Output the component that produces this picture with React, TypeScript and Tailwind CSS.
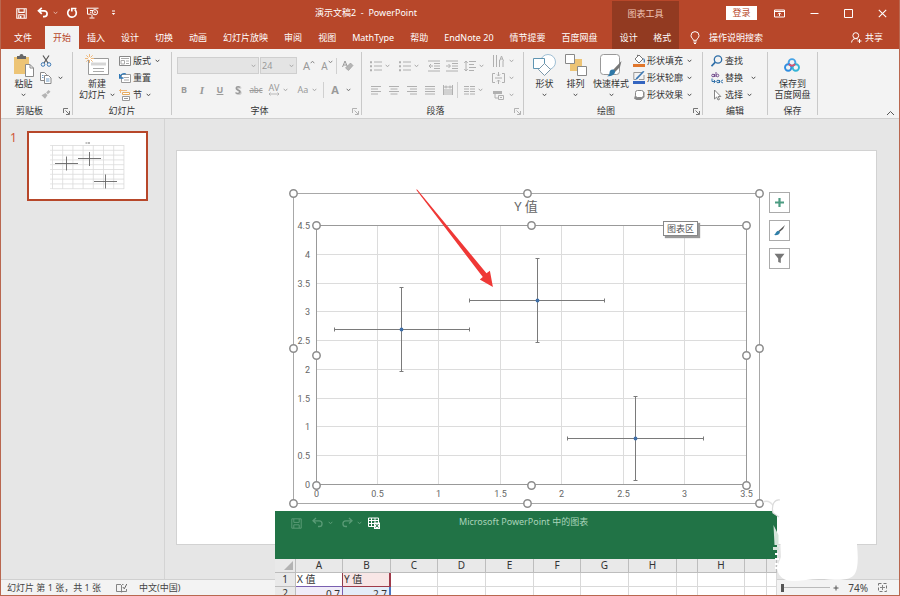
import type { ReactNode } from 'react';

interface IconProps {
  w?: number;
  h?: number;
  children: ReactNode;
}

const Icon = ({ w = 12, h = 12, children }: IconProps) => (
  <svg width={w} height={h} viewBox={`0 0 ${w} ${h}`} fill="none" className="shrink-0" aria-hidden="true">
    {children}
  </svg>
);

const Chevron = ({ color = '#555' }: { color?: string }) => (
  <Icon w={5} h={4}>
    <path d="M.7 .8 2.5 2.8 4.3 .8" stroke={color} />
  </Icon>
);

const Divider = () => <div className="my-[3px] w-px shrink-0 bg-[#c9c9c9]" />;

const Launcher = ({ color = '#777' }: { color?: string }) => (
  <button aria-label="更多选项" className="absolute right-0.5 bottom-[3px]">
    <Icon w={7} h={7}>
      <path d="M.5 5V.5H5M2.5 2.5 6 6M6.5 3v3.5H3" stroke={color} strokeWidth=".9" />
    </Icon>
  </button>
);

interface GroupProps {
  label: string;
  width: string;
  launcher?: string;
  children: ReactNode;
}

const Group = ({ label, width, launcher, children }: GroupProps) => (
  <>
    <section className={`relative flex shrink-0 flex-col ${width}`}>
      <div className="flex flex-1">{children}</div>
      <h2 className={`h-[14px] text-center leading-[14px] ${launcher ? 'pr-3.5' : ''}`}>{label}</h2>
      {launcher && <Launcher color={launcher} />}
    </section>
    <Divider />
  </>
);

interface BigButtonProps {
  icon: ReactNode;
  lines: string[];
  arrow?: boolean;
}

const BigButton = ({ icon, lines, arrow = true }: BigButtonProps) => (
  <button className="flex shrink-0 flex-col items-center pt-1 leading-[11px] whitespace-nowrap">
    <span className="mb-px flex h-6 items-center">{icon}</span>
    <span>{lines[0]}</span>
    <span className="flex h-[11px] items-center gap-1">
      {lines[1]}
      {arrow && <Chevron />}
    </span>
  </button>
);

const RowButton = ({ icon, text, arrow = true }: { icon: ReactNode; text: string; arrow?: boolean }) => (
  <button className="flex h-[17px] items-center gap-[2px] whitespace-nowrap">
    {icon}
    <span className="mr-0.5">{text}</span>
    {arrow && <Chevron />}
  </button>
);

const Tool = ({ label, width = 'w-[18px]', children }: { label: string; width?: string; children: ReactNode }) => (
  <button aria-label={label} className={`flex h-[17px] shrink-0 items-center justify-center ${width}`}>
    {children}
  </button>
);

const leftTabs = ['插入', '设计', '切换', '动画', '幻灯片放映', '审阅', '视图', 'MathType', '帮助', 'EndNote 20', '情节提要', '百度网盘'];

const Header = () => (
  <header className="flex h-[49px] shrink-0 bg-[#b7472a] text-white">
    <div className="flex w-[611px] shrink-0 flex-col">
      <div className="flex h-[26px] items-center pl-[15px]">
        <button aria-label="保存">
          <Icon w={11} h={11}>
            <path d="M.8 .8h9.4v9.4H.8zM2.8 1v3.4h5.4V1M2.8 10V6.8h5.4V10" stroke="#fff" strokeWidth="1.1" />
            <path d="M4 8h1.4v2H4z" fill="#fff" />
          </Icon>
        </button>
        <button aria-label="撤消" className="ml-2.5">
          <Icon>
            <path d="M4.8 .8 1.5 3.8l3.3 3M1.8 3.8h5.4a2.9 2.9 0 0 1 0 5.8H6" stroke="#fff" strokeWidth="1.7" />
          </Icon>
        </button>
        <span className="ml-1"><Chevron color="#e0b0a2" /></span>
        <button aria-label="恢复" className="ml-2">
          <Icon>
            <path d="M3.8 2.2A4.3 4.3 0 1 0 8.8 2.600M5.800 4.500V1.500h4.600" stroke="#fff" strokeWidth="1.7" />
          </Icon>
        </button>
        <button aria-label="从头开始" className="ml-2">
          <Icon w={13} h={12}>
            <path d="M.5 1.2h12M1.5 1.5v5.7h4M4 3.5h3M4 5.3h1.5M6 7.5v3M3.5 11h5" stroke="#fff" />
            <circle cx="9" cy="5.2" r="2.6" stroke="#fff" />
            <path d="m8.4 4 1.8 1.2-1.8 1.2z" fill="#fff" />
          </Icon>
        </button>
        <button aria-label="自定义快速访问工具栏" className="ml-3">
          <Icon w={5} h={6}>
            <path d="M1 1h3" stroke="#fff" />
            <path d="M.7 3h3.6L2.5 5z" fill="#fff" />
          </Icon>
        </button>
        <h1 className="ml-[199px] whitespace-pre">演示文稿2  -  PowerPoint</h1>
      </div>
      <nav className="flex h-[23px] items-stretch pl-[5px] whitespace-nowrap">
        <button className="mr-[5px] px-2">文件</button>
        <button className="bg-[#f3f3f3] px-2 text-[#b7472a]">开始</button>
        {leftTabs.map((tab) => (
          <button key={tab} className="px-2">{tab}</button>
        ))}
      </nav>
    </div>
    <div className="mt-px flex w-[67px] shrink-0 flex-col bg-[#923a21]">
      <div className="flex h-[25px] items-center justify-center text-[#f0c4b6]">图表工具</div>
      <div className="flex flex-1">
        <button className="flex-1">设计</button>
        <button className="flex-1">格式</button>
      </div>
    </div>
    <div className="flex flex-1 flex-col">
      <div className="flex h-[26px] items-center justify-end pr-3">
        <button className="mr-[17px] h-[14px] w-[31px] bg-white leading-[14px] text-[#b7472a]">登录</button>
        <button aria-label="功能区显示选项" className="mr-[25px]">
          <Icon w={11} h={9}>
            <path d="M.5 1h10v7H.5zM.5 2.5h10M5.5 7V4M4 5.3l1.5-1.5L7 5.3" stroke="#fff" />
          </Icon>
        </button>
        <button aria-label="最小化" className="mr-[25px]">
          <Icon w={9} h={9}><path d="M.5 4.5h8" stroke="#fff" /></Icon>
        </button>
        <button aria-label="最大化" className="mr-[25px]">
          <Icon w={9} h={9}><path d="M.5 .5h8v8h-8z" stroke="#fff" /></Icon>
        </button>
        <button aria-label="关闭">
          <Icon w={9} h={9}><path d="m.8 .8 7.4 7.4M8.2 .8.8 8.2" stroke="#fff" strokeWidth="1.1" /></Icon>
        </button>
      </div>
      <div className="flex h-[23px] items-center justify-between pr-4 pl-[11px]">
        <button className="flex items-center gap-[9px]">
          <Icon w={10} h={13}>
            <path d="M3.3 9.3C3.3 7.5 1 7 1 4.6a4 4 0 0 1 8 0C9 7 6.7 7.5 6.7 9.3zM3.4 11h3.2M4 12.5h2" stroke="#fff" />
          </Icon>
          操作说明搜索
        </button>
        <button className="flex items-center gap-[3px]">
          <Icon w={11} h={11}>
            <circle cx="4.8" cy="3.6" r="2.9" stroke="#fff" />
            <path d="M.6 10.5C.8 8 2.4 6.6 4.8 6.6c.9 0 1.6.2 2.2.6M8.5 7v4M6.5 9h4" stroke="#fff" />
          </Icon>
          共享
        </button>
      </div>
    </div>
  </header>
);

const ClipboardGroup = () => (
  <Group label="剪贴板" width="w-[71px]" launcher="#666">
    <div className="ml-3 flex gap-[6px]">
      <BigButton
        lines={['粘贴']}
        icon={
          <Icon w={21} h={23}>
            <path d="M1 3h15v17H1z" fill="#edc475" />
            <path d="M4 2h2.5a2 2 0 0 1 4 0H13v3H4z" fill="#666" />
            <path d="M12.5 10.500h4.500l3.500 3.500v8.500h-8z" fill="#fff" stroke="#8a8a8a" />
            <path d="M17 10.500V14h3.500" stroke="#8a8a8a" />
          </Icon>
        }
      />
      <div className="flex flex-col pt-[3px]">
        <Tool label="剪切" width="w-3">
          <Icon>
            <path d="M3 .5 8 8M9 .5 4 8" stroke="#555" strokeWidth="1.2" />
            <circle cx="3" cy="9.500" r="1.800" stroke="#3c78b4" />
            <circle cx="9" cy="9.500" r="1.800" stroke="#3c78b4" />
          </Icon>
        </Tool>
        <button aria-label="复制" className="flex h-[17px] items-center gap-[6px]">
          <Icon>
            <path d="M.5 .5h4l2 2v6h-6z" fill="#fff" stroke="#888" />
            <path d="M4.500 3.500h4l2.500 2.500v5.500H4.500z" fill="#fff" stroke="#888" />
            <path d="M2 3.500h1.500M2 5.500h1.500M6 7h3.500M6 9h3.500" stroke="#6f9dc8" />
          </Icon>
          <Chevron />
        </button>
        <Tool label="格式刷" width="w-3">
          <Icon w={10} h={9}>
            <path d="m7.500 0 2 1.800-2.700 2.400-1.600-1.700zM4.500 3l2 2.200L4 8.800.5 5.200z" fill="#b4b4b4" />
          </Icon>
        </Tool>
      </div>
    </div>
  </Group>
);

const SlidesGroup = () => (
  <Group label="幻灯片" width="w-[98px]">
    <div className="ml-[6px] flex gap-1">
      <BigButton
        lines={['新建', '幻灯片']}
        icon={
          <Icon w={24} h={22}>
            <path d="M3.500 4.500h20v16h-20z" fill="#fff" stroke="#9a9a9a" />
            <path d="M6 8.500h15v3H6z" fill="#d6d6d6" />
            <path d="M8 14.500h11M8 17.500h11" stroke="#aaa" />
            <path d="M4.500 0v9M0 4.500h9M1.300 1.300l6.400 6.400M7.700 1.300 1.300 7.700" stroke="#efb97c" />
            <circle cx="4.500" cy="4.500" r="1.500" fill="#fff" />
          </Icon>
        }
      />
      <div className="flex flex-col pt-[3px]">
        <RowButton
          text="版式"
          icon={
            <Icon>
              <path d="M.5 1.500h11v9H.5z" fill="#fff" stroke="#888" />
              <path d="M2 3.500h8M2 5.500h3.500v3.500H2zM7 6h3M7 8.500h3" stroke="#aaa" />
            </Icon>
          }
        />
        <RowButton
          text="重置"
          arrow={false}
          icon={
            <Icon>
              <path d="M2.500 2.500h9v8h-9z" fill="#fff" stroke="#999" />
              <path d="M5 5.500h5M5 8h5" stroke="#aaa" />
              <path d="M1 5.500c.5-3 3-4.500 6-3.500M.5 2v4h4" stroke="#2f78b7" strokeWidth="1.300" />
            </Icon>
          }
        />
        <RowButton
          text="节"
          icon={
            <Icon>
              <path d="M0 1.500h8M1.500 0v4" stroke="#efb97c" />
              <path d="M3.500 3.500h7v2h-7z" fill="#fff" stroke="#e6ac60" />
              <path d="M3.500 7.500h7v4h-7zM5 9.500h4" fill="#fff" stroke="#999" />
            </Icon>
          }
        />
      </div>
    </div>
  </Group>
);

const FontGroup = () => (
  <Group label="字体" width="w-[189px]" launcher="#aaa">
    <div className="flex flex-col gap-[7px] pt-2 text-[#9a9a9a]">
      <div className="flex items-center pl-[5px]">
        <div className="relative mr-px">
          <select aria-label="字体" className="block h-[17px] w-[82px] appearance-none border border-[#cfcfcf] bg-[#e4e4e4] leading-[15px]">
            <option value=""></option>
          </select>
          <span className="pointer-events-none absolute top-[5px] right-[3px] flex h-2 items-center"><Chevron color="#aaa" /></span>
        </div>
        <div className="relative mr-[3px]">
          <select aria-label="字号" className="block h-[17px] w-[37px] appearance-none border border-[#cfcfcf] bg-[#e4e4e4] pl-px leading-[15px]">
            <option>24</option>
          </select>
          <span className="pointer-events-none absolute top-[5px] right-[3px] flex h-2 items-center"><Chevron color="#aaa" /></span>
        </div>
        <Tool label="增大字号"><span className="text-[11px]">A</span><span className="mb-2 rotate-180"><Chevron color="#888" /></span></Tool>
        <Tool label="减小字号"><span className="text-[10px]">A</span><span className="mb-2"><Chevron color="#888" /></span></Tool>
        <div className="h-4 w-px bg-[#d0d0d0]" />
        <Tool label="清除格式" width="w-[22px]">
          <Icon w={12} h={12}>
            <path d="M.5 7 3 1l2.500 6M1.500 5h3" stroke="#999" />
            <path d="m8.500 3 2.500 2.500-4.500 5L3.500 8z" fill="#b5b5b5" stroke="#999" strokeWidth=".6" />
          </Icon>
        </Tool>
      </div>
      <div className="flex items-center pl-[3px]">
        <Tool label="加粗"><b>B</b></Tool>
        <Tool label="倾斜"><i className="[font-family:'Liberation_Serif',serif] text-[11px] font-bold">I</i></Tool>
        <Tool label="下划线"><b className="underline">U</b></Tool>
        <Tool label="文字阴影"><b className="text-[11px] drop-shadow-[1px_1px_0_#ccc]">S</b></Tool>
        <Tool label="删除线"><s className="text-[8px]">abc</s></Tool>
        <Tool label="字符间距">
          <span className="flex flex-col items-center leading-[9px]">
            AV
            <Icon w={12} h={4}><path d="M1 2h10M2.500 .5 1 2l1.500 1.500M9.500 .5 11 2 9.500 3.500" stroke="#aaa" strokeWidth=".8" /></Icon>
          </span>
        </Tool>
        <Chevron color="#aaa" />
        <span className="ml-1.5 flex items-center"><Tool label="更改大小写">Aa</Tool></span>
        <Chevron color="#aaa" />
        <div className="ml-1.5 h-4 w-px bg-[#d0d0d0]" />
        <Tool label="字体颜色" width="w-[22px]"><b className="text-[11px]">A</b></Tool>
        <Chevron color="#777" />
      </div>
    </div>
  </Group>
);

const grey = '#b0b0b0';

const alignments = [
  { label: '左对齐', d: 'M0 1.500h10M0 4h7M0 6.500h10M0 9h7' },
  { label: '居中', d: 'M0 1.500h10M1.500 4h7M0 6.500h10M1.500 9h7' },
  { label: '右对齐', d: 'M0 1.500h10M3 4h7M0 6.500h10M3 9h7' },
  { label: '两端对齐', d: 'M0 1.500h10M0 4h10M0 6.500h10M0 9h10' },
  { label: '分散对齐', d: 'M.5 0v10M9.500 0v10M1 2h8M3 .5v3M7 .5v3M0 5h10M0 7h10M0 9h10' },
];

const ParagraphGroup = () => (
  <Group label="段落" width="w-[161px]" launcher="#aaa">
    <div className="flex w-[126px] flex-col gap-[7px] pt-2 pl-[5px]">
      <div className="flex items-center">
        {['项目符号', '编号'].map((label) => (
          <span key={label} className="mr-[6px] flex items-center">
            <Tool label={label}>
              <Icon>
                <path d="M4 2h8M4 6h8M4 10h8" stroke={grey} />
                <path d="M0 1.200h2v2H0zM0 5.200h2v2H0zM0 9.200h2v2H0z" fill={grey} />
              </Icon>
            </Tool>
            <Chevron color="#aaa" />
          </span>
        ))}
        <Tool label="降低列表级别">
          <Icon><path d="M0 1h12M6 3.500h6M6 6h6M6 8.500h6M0 11h12M5 6H1M3 4 1 6l2 2" stroke={grey} /></Icon>
        </Tool>
        <Tool label="提高列表级别">
          <Icon><path d="M0 1h12M6 3.500h6M6 6h6M6 8.500h6M0 11h12M0 6h4M2.500 4l2 2-2 2" stroke={grey} /></Icon>
        </Tool>
        <Tool label="行距">
          <Icon><path d="M5 1.500h7M5 4.500h5M5 7.500h7M5 10.500h5M2 1v10M.3 3 2 1l1.700 2M.3 9 2 11l1.700-2" stroke={grey} /></Icon>
        </Tool>
        <Chevron color="#aaa" />
      </div>
      <div className="flex items-center">
        {alignments.map((a) => (
          <Tool key={a.label} label={a.label}>
            <Icon w={10} h={10}><path d={a.d} stroke={grey} /></Icon>
          </Tool>
        ))}
        <div className="mr-0.5 h-4 w-px bg-[#d0d0d0]" />
        <Tool label="分栏">
          <Icon w={11} h={10}><path d="M0 1.500h5M0 4h5M0 6.500h5M0 9h5M6 1.500h5M6 4h5M6 6.500h5M6 9h5" stroke={grey} /></Icon>
        </Tool>
        <Chevron color="#aaa" />
      </div>
    </div>
    <div className="ml-1 flex flex-col pt-[3px]">
      <button aria-label="文字方向" className="flex h-[17px] items-center gap-1">
        <Icon w={13} h={12}><path d="M1.500 0v12M4.500 0v12M7.500 5v7M11 6v6M7.500 6l2-5 2 5M8.200 4h2.600" stroke={grey} /></Icon>
        <Chevron color="#aaa" />
      </button>
      <button aria-label="对齐文本" className="flex h-[17px] items-center gap-1">
        <Icon w={13} h={12}><path d="M3 1.500H.5v9H3M10 1.500h2.500v9H10M3 6h7M6.500 0v4M5 2.500 6.500 4 8 2.500M6.500 12V8M5 9.500 6.500 8 8 9.500" stroke={grey} /></Icon>
        <Chevron color="#aaa" />
      </button>
      <button aria-label="转换为 SmartArt" className="flex h-[17px] items-center gap-1">
        <Icon w={13} h={12}>
          <path d="M1 2h9v3H1z" fill={grey} />
          <path d="M3 5v4h3M6.500 6.500h5v4h-5zM8 8.500h2" stroke={grey} />
        </Icon>
        <Chevron color="#aaa" />
      </button>
    </div>
  </Group>
);

const DrawingGroup = () => (
  <Group label="绘图" width="w-[178px]" launcher="#666">
    <div className="flex w-full pl-[9px]">
      <div className="flex w-[23px] justify-center">
        <BigButton
          lines={['形状']}
          icon={
            <Icon w={23} h={22}>
              <circle cx="15" cy="8" r="7.500" fill="#fff" stroke="#9fbfd4" />
              <path d="M.5 4.500h11v10H.5z" fill="#fff" stroke="#5f95b2" />
              <path d="m11.500 9.500 6 6-6 6-6-6z" fill="#fff" stroke="#7b98aa" />
            </Icon>
          }
        />
      </div>
      <div className="ml-[9px] flex w-[21px] justify-center">
        <BigButton
          lines={['排列']}
          icon={
            <Icon w={22} h={22}>
              <path d="M5 5h12v12H5z" fill="#edc475" />
              <path d="M.5 .5h9v9h-9zM12.500 12.500h9v9h-9z" fill="#fff" stroke="#888" />
            </Icon>
          }
        />
      </div>
      <div className="ml-[7px]">
        <BigButton
          lines={['快速样式']}
          icon={
            <Icon w={22} h={23}>
              <rect x=".5" y=".5" width="19" height="20" rx="3" fill="#fff" stroke="#999" />
              <path d="m21.500 7-1.500 6-5 5-2-2z" fill="#777" />
              <path d="M12.500 15.500c2 0 3 1.200 2.500 2.800C14.300 21 11 22.500 7 22.300c2-1 2.500-2 2.600-4 .1-1.700 1.300-2.800 2.900-2.800z" fill="#2f78a8" />
            </Icon>
          }
        />
      </div>
      <div className="ml-1 flex flex-col pt-[3px]">
        <RowButton
          text="形状填充"
          icon={
            <Icon w={12} h={13}>
              <path d="M0 10h12v3H0z" fill="#e0762c" />
              <path d="m6 1 4 4-4 4-4-4zM4.500 3V.8" fill="#fff" stroke="#777" />
              <path d="M10.500 4.500c1.200 1.500 1.200 2.500.5 4" stroke="#3c78b4" strokeWidth="1.200" />
            </Icon>
          }
        />
        <RowButton
          text="形状轮廓"
          icon={
            <Icon w={12} h={13}>
              <path d="M0 10h12v3H0z" fill="#3465c0" />
              <path d="M9 1.500H.8v7H3M11 4v4.500H6" stroke="#999" />
              <path d="m11.500.5-7 7.500-2 1 .5-2L10 0z" fill="#3c78b4" />
            </Icon>
          }
        />
        <RowButton
          text="形状效果"
          icon={
            <Icon>
              <path d="M3 3.500 1 9.500 3.500 11H8l3.500-3V3z" fill="#888" />
              <rect x="2.500" y="1.500" width="8" height="7" rx="2" fill="#fff" stroke="#888" />
            </Icon>
          }
        />
      </div>
    </div>
  </Group>
);

const EditGroup = () => (
  <Group label="编辑" width="w-[64px]">
    <div className="ml-2 flex flex-col pt-[3px]">
      <RowButton
        text="查找"
        arrow={false}
        icon={
          <Icon>
            <circle cx="7" cy="4.500" r="3.700" stroke="#2f6fa8" strokeWidth="1.300" />
            <path d="m4.300 7.200-3.800 4" stroke="#2f6fa8" strokeWidth="1.700" />
          </Icon>
        }
      />
      <div className="flex items-center gap-1.5">
        <RowButton
          text="替换"
          arrow={false}
          icon={
            <Icon>
              <circle cx="2" cy="3.500" r="1.300" stroke="#76508f" />
              <circle cx="6.500" cy="3.500" r="1.300" stroke="#76508f" />
              <path d="M3.500 2v3M5 0v5" stroke="#76508f" />
              <circle cx="7" cy="9.500" r="1.300" stroke="#2f6fa8" />
              <path d="M8.500 8v3M12 8.300c-2.500-.6-2.500 3 0 2.400M1 6.500v3h3M2.800 7.800l1.500 1.700-1.500 1.700" stroke="#2f6fa8" />
            </Icon>
          }
        />
        <Chevron />
      </div>
      <RowButton
        text="选择"
        icon={
          <Icon>
            <path d="M3.500 1v9l2.200-2 1.300 3 1.500-.6L7.200 7.500h2.600z" fill="#fff" stroke="#777" strokeWidth=".9" />
          </Icon>
        }
      />
    </div>
  </Group>
);

const SaveGroup = () => (
  <Group label="保存" width="w-[49px]">
    <div className="flex w-full justify-center">
      <BigButton
        lines={['保存到', '百度网盘']}
        arrow={false}
        icon={
          <Icon w={16} h={14}>
            <circle cx="8" cy="4.500" r="3.400" stroke="#45a3e6" strokeWidth="1.900" />
            <circle cx="4.200" cy="9.500" r="3.200" stroke="#2f8de0" strokeWidth="1.900" />
            <circle cx="11.800" cy="9.500" r="3.200" stroke="#35b5d6" strokeWidth="1.900" />
            <path d="M5 6c.8 1.200 1.800 1.700 3 1.700S10.200 7.200 11 6" stroke="#e2506b" strokeWidth="1.900" />
          </Icon>
        }
      />
    </div>
  </Group>
);

const Ribbon = () => (
  <div className="flex h-[70px] shrink-0 border-b border-[#cfcfcf] bg-[#f3f3f3] text-[#333]">
    <ClipboardGroup />
    <SlidesGroup />
    <FontGroup />
    <ParagraphGroup />
    <DrawingGroup />
    <EditGroup />
    <SaveGroup />
    <button aria-label="折叠功能区" className="mt-auto mr-1 mb-0.5 ml-auto">
      <Icon w={9} h={6}><path d="m1 5 3.500-3.500L8 5" stroke="#555" /></Icon>
    </button>
  </div>
);

const points = [
  { x: 0.7, y: 2.7 },
  { x: 1.8, y: 3.2 },
  { x: 2.6, y: 0.8 },
];
const xTicks = [0, 0.5, 1, 1.5, 2, 2.5, 3, 3.5];
const yTicks = [0, 0.5, 1, 1.5, 2, 2.5, 3, 3.5, 4, 4.5];
const X_ERR = 0.55;
const Y_ERR = 0.73;

// plot area is 430 x 259 with its top left corner at 31,40
const px = (v: number) => Math.floor(31 + (v / 3.5) * 430) + 0.5;
const py = (v: number) => Math.round(299 - (v / 4.5) * 259) + 0.5;

const outerHandles = [
  [8, 8], [242, 8], [474, 8], [8, 163], [474, 163], [8, 318], [242, 318], [474, 318],
];
const innerHandles = [
  [31, 40], [246, 40], [461, 40], [31, 170], [461, 170], [31, 300], [246, 300], [461, 300],
];

const Chart = () => (
  <svg width="484" height="327" viewBox="0 0 484 327" role="img" aria-label="Y 值">
    <rect x="8.500" y="8.500" width="466" height="310" fill="none" stroke="#a8a8a8" />
    {xTicks.map((t) => (
      <line key={t} x1={px(t)} x2={px(t)} y1="40" y2="299" stroke="#dcdcdc" />
    ))}
    {yTicks.map((t) => (
      <line key={t} x1="31" x2="461" y1={py(t)} y2={py(t)} stroke="#dcdcdc" />
    ))}
    <rect x="31.500" y="40.500" width="430" height="259" fill="none" stroke="#999" />
    <g fontSize="9" fill="#666" className="[font-family:Roboto,sans-serif]">
      {xTicks.map((t) => (
        <text key={t} x={px(t)} y="312" textAnchor="middle">{t}</text>
      ))}
      {yTicks.map((t) => (
        <text key={t} x="25" y={py(t) + 3} textAnchor="end">{t}</text>
      ))}
    </g>
    <text x="241" y="26" fontSize="13" fill="#666" textAnchor="middle">Y 值</text>
    {points.map((p) => (
      <g key={p.x} stroke="#7a7a7a">
        <path d={`M${px(p.x - X_ERR)} ${py(p.y)}H${px(p.x + X_ERR)}M${px(p.x - X_ERR)} ${py(p.y) - 2}v4M${px(p.x + X_ERR)} ${py(p.y) - 2}v4`} />
        <path d={`M${px(p.x)} ${py(p.y - Y_ERR)}V${py(p.y + Y_ERR)}M${px(p.x) - 2} ${py(p.y - Y_ERR)}h4M${px(p.x) - 2} ${py(p.y + Y_ERR)}h4`} />
        <circle cx={px(p.x)} cy={py(p.y)} r="1.900" fill="#3f6fa8" stroke="none" />
      </g>
    ))}
    {[...outerHandles, ...innerHandles].map(([x, y]) => (
      <circle key={`${x}-${y}`} cx={x + 0.5} cy={y + 0.5} r="3.700" fill="#fff" stroke="#8c8c8c" strokeWidth="1.500" />
    ))}
    <path d="m131 4.500 1.400.3 69.100 83.500 3.400-2.600 3 16.200-13.100-7.300 3-2.500z" fill="#ef3836" />
  </svg>
);

const Thumbnail = () => (
  <svg viewBox="0 0 117 66" className="block w-full" aria-hidden="true">
    {[0, 1, 2, 3, 4, 5, 6, 7].map((i) => (
      <line key={i} x1={23.5 + i * 10.2} x2={23.5 + i * 10.2} y1="12" y2="56" stroke="#dadada" strokeWidth=".8" />
    ))}
    {[0, 1, 2, 3, 4, 5, 6, 7, 8, 9].map((i) => (
      <line key={i} x1="23.500" x2="95" y1={12.5 + i * 4.8} y2={12.5 + i * 4.8} stroke="#dadada" strokeWidth=".8" />
    ))}
    <path d="M22 12v44" stroke="#ccc" strokeDasharray="1 3.800" />
    <path d="M56.500 10h2M60 9v2" stroke="#888" strokeWidth="1.200" />
    <path d="M26 30.500h23M37.500 23.500v14M49 25.500h23M60.500 19v14M65 48.500h23M76.500 41.500v14" stroke="#666" strokeWidth=".9" />
  </svg>
);

const sideButton = 'flex size-[21px] items-center justify-center border border-[#ababab] bg-white';

const Workspace = () => (
  <main className="flex min-h-0 flex-1 bg-[#e6e6e6]">
    <aside className="flex w-[164px] shrink-0 items-start border-r border-[#d4d4d4] pt-3 pl-[9px]">
      <span className="w-[17px] pt-px text-[12px] leading-[12px] text-[#d0563a]">1</span>
      <button aria-label="幻灯片 1" className="w-[121px] border-2 border-[#b7472a] bg-white">
        <Thumbnail />
      </button>
    </aside>
    <div className="flex flex-1 pt-[31px] pr-[22px] pb-[34px] pl-[11px]">
      <div className="relative flex-1 border border-[#d2d2d2] bg-white">
        <div className="absolute top-[34px] left-[108px]">
          <Chart />
          <div className="absolute top-9 left-[378px] border border-[#888] bg-white px-[3px] leading-[13px] text-[#555] shadow-[2px_2px_1px_#999]">图表区</div>
        </div>
        <div className="absolute top-[41px] left-[592px] flex flex-col gap-[7px]">
          <button aria-label="图表元素" className={sideButton}>
            <Icon w={9} h={9}><path d="M4.500 0v9M0 4.500h9" stroke="#4c9c82" strokeWidth="2.200" /></Icon>
          </button>
          <button aria-label="图表样式" className={sideButton}>
            <Icon w={11} h={11}>
              <path d="M11 0 9 4 5.500 7 4.500 6z" fill="#555" />
              <path d="M4.500 5.800 6 7.200C5.500 9.500 3 10.500 0 10c1.800-.6 1.500-3.600 4.500-4.200z" fill="#2f7fa8" />
            </Icon>
          </button>
          <button aria-label="图表筛选器" className={sideButton}>
            <Icon w={11} h={11}><path d="M.5 .8h10L6.800 5.500V10L4.200 9V5.500z" fill="#777" /></Icon>
          </button>
        </div>
      </div>
    </div>
  </main>
);

const columns = ['A', 'B', 'C', 'D', 'E', 'F', 'G', 'H', '', 'H', '', ''];
const columnWidths = [47, 48, 47, 48, 48, 47, 48, 48, 21, 47, 22, 10];

const cell = 'border-r border-b border-[#d9d9d9] p-0';
const rowHead = 'border-r border-b border-[#bdbdbd] bg-[#e9e9e9] p-0 text-center font-normal';

const DataSheet = () => (
  <section className="absolute bottom-0 left-[274px] h-[84px] w-[502px] overflow-hidden bg-white">
    <div className="flex h-12 items-start bg-[#217346]">
      <div className="flex h-6 w-[184px] items-center pl-4">
        <button aria-label="保存">
          <Icon w={11} h={11}>
            <path d="M.8 .8h9.400v9.400H.8zM2.800 1v3.400h5.400V1M2.800 10V6.800h5.400V10" stroke="#5a9b76" />
          </Icon>
        </button>
        <button aria-label="撤消" className="ml-2.5">
          <Icon>
            <path d="M4 1 1 3.800l3 2.800M1.500 3.800h5.700a2.700 2.700 0 0 1 0 5.700H6" stroke="#5a9b76" strokeWidth="1.300" />
          </Icon>
        </button>
        <span className="ml-1"><Chevron color="#5a9b76" /></span>
        <button aria-label="恢复" className="ml-2">
          <Icon>
            <path d="m8 1 3 2.800-3 2.800M10.500 3.800H4.800a2.700 2.700 0 0 0 0 5.700H6" stroke="#5a9b76" strokeWidth="1.300" />
          </Icon>
        </button>
        <span className="ml-1"><Chevron color="#5a9b76" /></span>
        <button aria-label="在 Microsoft Excel 中编辑数据" className="ml-1.5">
          <Icon>
            <path d="M.5 1h10v8.500H.5zM.5 3.500h10M.5 6.500h6M3.500 1v8.500M7 1v5" stroke="#fff" />
            <path d="M6 5.500h6V12H6z" fill="#fff" />
            <path d="m7.500 7 3 3.500M10.500 7l-3 3.500" stroke="#217346" />
          </Icon>
        </button>
      </div>
      <h2 className="leading-[22px] text-[#a9d3ba]">Microsoft PowerPoint 中的图表</h2>
    </div>
    <table className="w-full table-fixed border-separate border-spacing-0 text-[10px] text-[#333]">
      <colgroup>
        <col className="w-[21px]" />
        {columnWidths.map((w, i) => (
          <col key={i} style={{ width: w }} />
        ))}
      </colgroup>
      <thead>
        <tr className="h-[14px] leading-[13px]">
          <th className={rowHead} aria-label="全选">
            <span className="mr-0.5 flex justify-end">
              <Icon w={9} h={9}><path d="M9 0v9H0z" fill="#b3b3b3" /></Icon>
            </span>
          </th>
          {columns.map((c, i) => (
            <th key={i} className={rowHead}>{c}</th>
          ))}
        </tr>
      </thead>
      <tbody>
        <tr className="h-[14px] leading-[13px]">
          <th className={rowHead}>1</th>
          <td className="border-r border-b border-r-[#8f3a4a] border-b-[#7a5fb0] p-0 pl-px">X 值</td>
          <td className="border-r-2 border-b border-[#a03a4a] bg-[#f8e6e6] p-0 pl-px">Y 值</td>
          {columns.slice(2).map((_, i) => (
            <td key={i} className={cell} />
          ))}
        </tr>
        <tr className="h-[14px] leading-[13px]">
          <th className={rowHead}>2</th>
          <td className="border-r border-[#7a5fb0] bg-[#f0ecf8] p-0 pr-0.5 text-right">0.7</td>
          <td className="border-r-2 border-[#4a74c0] bg-[#e4edf8] p-0 pr-0.5 text-right">2.7</td>
          {columns.slice(2).map((_, i) => (
            <td key={i} className={cell} />
          ))}
        </tr>
      </tbody>
    </table>
  </section>
);

const StatusBar = () => (
  <footer className="flex h-4 shrink-0 items-center border-t border-[#d0d0d0] bg-[#f3f3f3] pl-[6px] text-[#444]">
    <span className="w-[109px] whitespace-nowrap">幻灯片 第 1 张，共 1 张</span>
    <button aria-label="拼写检查" className="mr-3">
      <Icon w={11} h={10}>
        <path d="M5 1.500H.5v7H5l.5.8.5-.8h4.500V6M5.500 2v7M6 1.500h1.500" stroke="#777" strokeWidth=".9" />
        <path d="m6.800 4 1.500 1.800L10.800 1" stroke="#666" />
      </Icon>
    </button>
    <button>中文(中国)</button>
    <input
      type="range"
      aria-label="缩放"
      defaultValue={0}
      className="ml-auto h-2.5 w-[49px] appearance-none bg-[linear-gradient(#bbb,#bbb)] bg-[length:100%_1px] bg-center bg-no-repeat [&::-webkit-slider-thumb]:h-2 [&::-webkit-slider-thumb]:w-[3px] [&::-webkit-slider-thumb]:appearance-none [&::-webkit-slider-thumb]:bg-[#555]"
    />
    <button aria-label="放大" className="ml-[3px]">
      <Icon w={6} h={6}><path d="M3 .5v5M.5 3h5" stroke="#555" /></Icon>
    </button>
    <span className="mr-2.5 ml-[9px] text-[10px]">74%</span>
    <button aria-label="适应窗口" className="mr-3">
      <Icon w={9} h={9}>
        <path d="M.5 .5h8v8h-8z" stroke="#777" strokeDasharray="3 2" />
        <path d="M4.500 2v5M2 4.500h5" stroke="#888" />
      </Icon>
    </button>
  </footer>
);

const CloudPatch = () => (
  <svg width="105" height="86" viewBox="0 0 105 86" className="pointer-events-none absolute right-[39px] bottom-3" fill="none" aria-hidden="true">
    <path d="M26 2h76v46c1 10 2 26-4 31-7 6-20 3-34 3-12 0-24 4-33 1-6-2-9-8-9-13l4-10-1-24-2-20z" fill="#fff" />
    <path d="M8 5c5-2 11 1 11 8" stroke="#e2e2e2" strokeWidth="1.500" />
    <path d="M25 3c-5-1-9 4-7 13l6 4" fill="#fff" stroke="#dadada" strokeWidth="1.200" />
    <path d="m18.500 28 5 10v10h-4zM18 50h6v3h-6z" fill="#d5e4da" />
    <path d="M20 57h3M20 62h4M20 67h3M20 71h3" stroke="#fff" strokeWidth="2" />
  </svg>
);

const App = () => {
  return (
    <div className="relative flex h-screen flex-col overflow-hidden border-x border-b border-[#b9674f] [font-family:'Noto_Sans','Noto_Sans_CJK_SC',sans-serif] text-[9px] leading-3">
      <Header />
      <Ribbon />
      <Workspace />
      <StatusBar />
      <DataSheet />
      <CloudPatch />
    </div>
  );
};

export default App;
